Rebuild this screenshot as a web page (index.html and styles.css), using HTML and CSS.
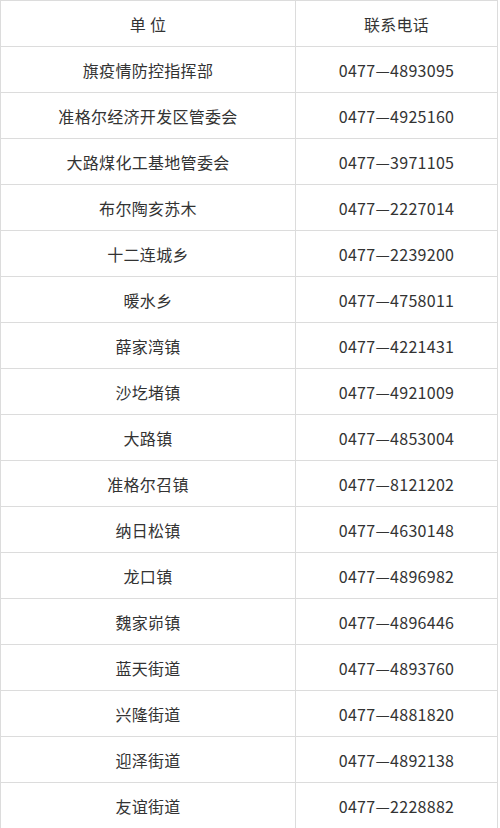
FILE: index.html
```html
<!DOCTYPE html>
<html>
<head>
    <title>联系电话</title>
    <link rel="stylesheet" href="styles.css">
</head>
<body>

<table class="phone-table">
    <tr><th>单 位</th><th>联系电话</th></tr>
    <tr><td>旗疫情防控指挥部</td><td>0477—4893095</td></tr>
    <tr><td>准格尔经济开发区管委会</td><td>0477—4925160</td></tr>
    <tr><td>大路煤化工基地管委会</td><td>0477—3971105</td></tr>
    <tr><td>布尔陶亥苏木</td><td>0477—2227014</td></tr>
    <tr><td>十二连城乡</td><td>0477—2239200</td></tr>
    <tr><td>暖水乡</td><td>0477—4758011</td></tr>
    <tr><td>薛家湾镇</td><td>0477—4221431</td></tr>
    <tr><td>沙圪堵镇</td><td>0477—4921009</td></tr>
    <tr><td>大路镇</td><td>0477—4853004</td></tr>
    <tr><td>准格尔召镇</td><td>0477—8121202</td></tr>
    <tr><td>纳日松镇</td><td>0477—4630148</td></tr>
    <tr><td>龙口镇</td><td>0477—4896982</td></tr>
    <tr><td>魏家峁镇</td><td>0477—4896446</td></tr>
    <tr><td>蓝天街道</td><td>0477—4893760</td></tr>
    <tr><td>兴隆街道</td><td>0477—4881820</td></tr>
    <tr><td>迎泽街道</td><td>0477—4892138</td></tr>
    <tr><td>友谊街道</td><td>0477—2228882</td></tr>
</table>

</body>
</html>
```

FILE: styles.css
```css
body {
    margin: 0;
    padding: 0;
    background-color: #fff;
    font-family: "Noto Sans CJK SC", "Noto Sans", sans-serif;
    color: #333;
}

.phone-table {
    width: 498px;
    border-collapse: collapse;
    table-layout: fixed;
}

.phone-table th,
.phone-table td {
    height: 45px;
    padding: 0;
    border: 1px solid #dcdcdc;
    text-align: center;
    font-size: 16px;
    font-weight: normal;
    letter-spacing: 0.3px;
}

.phone-table th:first-child,
.phone-table td:first-child {
    width: 294px;
}
```
